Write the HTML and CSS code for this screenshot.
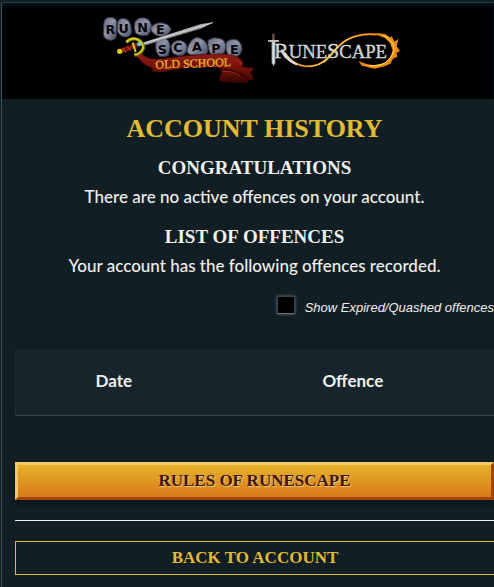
FILE: index.html
```html
<!DOCTYPE html>
<html lang="en">
<head>
    <meta charset="UTF-8">
    <meta name="viewport" content="width=device-width, initial-scale=1.0">
    <title>Account History</title>
    <link rel="stylesheet" href="styles.css">
</head>
<body>
    <div class="page">
        <header class="header">
            <a href="#" class="logo-link" aria-label="Old School RuneScape">
                <svg class="logo-osrs" viewBox="30 36 480 225">
                    <defs>
                        <linearGradient id="stone" x1="0" y1="0" x2="1" y2="1">
                            <stop offset="0" stop-color="#666b80"/>
                            <stop offset="0.45" stop-color="#9093a6"/>
                            <stop offset="1" stop-color="#454a5e"/>
                        </linearGradient>
                        <linearGradient id="ribbon" x1="0" y1="0" x2="0" y2="1">
                            <stop offset="0" stop-color="#8f1f16"/>
                            <stop offset="0.5" stop-color="#751009"/>
                            <stop offset="1" stop-color="#350604"/>
                        </linearGradient>
                        <linearGradient id="gold" x1="0" y1="0" x2="0" y2="1">
                            <stop offset="0" stop-color="#fff04a"/>
                            <stop offset="1" stop-color="#d98a12"/>
                        </linearGradient>
                    </defs>
                    <!-- stones -->
                    <g fill="url(#stone)" stroke="#34384a" stroke-width="3">
                        <path d="M42 66Q44 52 62 52Q79 53 80 67L79 108Q76 121 61 121Q40 118 40 100Z"/>
                        <path d="M82 77Q81 58 98 55Q119 57 122 76L125 96Q121 112 104 111Q86 107 82 91Z"/>
                        <path d="M135 65Q145 51 164 54Q181 58 184 76Q186 96 172 106Q152 111 137 100Q130 83 135 65Z"/>
                        <path d="M181 84Q193 68 211 68Q237 70 243 88Q238 106 212 109Q188 107 181 84Z"/>
                        <path d="M199 122Q208 109 226 115Q241 124 240 143L235 166Q222 174 207 168Q196 155 197 138Z"/>
                        <path d="M243 139Q249 122 268 121Q286 123 291 140Q292 160 276 166Q257 169 247 157Z"/>
                        <path d="M292 146Q299 119 320 112Q344 115 353 139Q357 158 345 165L303 165Q288 160 292 146Z"/>
                        <path d="M354 121Q369 109 388 115Q406 119 407 139Q406 161 392 170L365 166Q352 149 354 121Z"/>
                        <path d="M408 128Q419 116 437 118Q456 126 456 148Q453 166 438 172L415 167Q406 151 408 128Z"/>
                    </g>
                    <g class="stone-letters">
                        <text x="61" y="103">R</text>
                        <text x="101" y="99">U</text>
                        <text x="158" y="96">N</text>
                        <text x="211" y="101">E</text>
                        <text x="217" y="161">S</text>
                        <text x="264" y="157">C</text>
                        <text x="321" y="154">A</text>
                        <text x="378" y="158">P</text>
                        <text x="433" y="161">E</text>
                    </g>
                    <!-- ribbon -->
                    <path d="M130 159L152 160Q174 180 208 177Q287 165 368 162Q445 158 459 187L456 200L491 205L482 218L492 237L475 240L470 249L391 244L388 234L396 216L387 203Q320 194 215 216L187 215L187 204L163 193Z" fill="url(#ribbon)" stroke="#3b0805" stroke-width="2"/>
                    <path d="M388 207Q426 207 456 226L470 230" fill="none" stroke="#3a0604" stroke-width="6"/>
                    <path d="M397 213Q431 213 451 227M431 180Q449 181 459 194" fill="none" stroke="#b53a27" stroke-width="2"/>
                    <text class="ribbon-text" x="310" y="202" transform="rotate(-2 310 202)" fill="url(#gold)">OLD SCHOOL</text>
                    <!-- sword -->
                    <path d="M157 128L333 72L371 67L337 84L160 137Z" fill="#a9adb2"/>
                    <path d="M159 131L369 68" stroke="#e9e9e9" stroke-width="2"/>
                    <path d="M159 137L337 84" stroke="#5f6469" stroke-width="2"/>
                    <path d="M90 154L142 134" stroke="#7f160d" stroke-width="14"/>
                    <path d="M99 143L108 158M112 139L121 153" stroke="#d14b20" stroke-width="3"/>
                    <path d="M109 128Q122 113 142 118Q160 126 161 144Q153 164 134 166" fill="none" stroke="#746f06" stroke-width="10"/>
                    <path d="M109 126Q123 111 142 118Q159 126 159 144Q152 162 133 164M128 128L137 156" fill="none" stroke="#d7cc14" stroke-width="6"/>
                    <circle cx="89" cy="154" r="8" fill="#d8c916"/>
                    <circle cx="148" cy="132" r="7" fill="#6fc9c5"/>
                </svg>
            </a>
            <a href="#" class="logo-link" aria-label="RuneScape">
                <svg class="logo-rs" viewBox="30 30 420 120">
                    <defs>
                        <linearGradient id="silver" x1="0" y1="0" x2="0" y2="1">
                            <stop offset="0" stop-color="#fafafa"/>
                            <stop offset="0.55" stop-color="#bfc3c5"/>
                            <stop offset="1" stop-color="#f0f0f0"/>
                        </linearGradient>
                        <linearGradient id="fire" x1="0" y1="0" x2="1" y2="0">
                            <stop offset="0" stop-color="#e8e8e8"/>
                            <stop offset="0.2" stop-color="#e5a91c"/>
                            <stop offset="0.55" stop-color="#ffe271"/>
                            <stop offset="1" stop-color="#f38b0b"/>
                        </linearGradient>
                    </defs>
                    <!-- flaming loop -->
                    <path d="M89 98C113 135 143 142 173 138C214 132 225 101 256 74C287 45 332 40 365 44" fill="none" stroke="#a73b04" stroke-width="6"/>
                    <path d="M89 98C113 135 143 142 173 138C214 132 225 101 256 74C287 45 332 40 365 44" fill="none" stroke="url(#fire)" stroke-width="4"/>
                    <path d="M340 41L370 40L390 42L407 53L410 47L418 65L430 57L425 79L435 93L424 99L427 110L414 116L406 131L389 139L359 146L321 137L310 124L338 133L360 136L389 128L406 111L413 91L405 70L390 54L368 46Z" fill="#ef8910"/>
                    <path d="M382 46Q418 60 417 88Q411 120 380 134L342 139" fill="none" stroke="#ffe056" stroke-width="3"/>
                    <text class="rs-letters" x="57" y="113"><tspan class="rs-cap">R</tspan>UNE<tspan class="rs-cap">S</tspan>CAPE</text>
                    <path d="M53 41L58 41L58 60L72 60L72 65L61 66L61 128L56 138L50 128L50 66L39 65L39 60L53 60Z" fill="#b9bec0"/>
                    <path d="M55 67V131" stroke="#f7f7f7" stroke-width="2"/>
                    <path d="M55 42V60" stroke="#7b4727" stroke-width="4"/>
                    <path d="M80 89Q94 122 126 134" fill="none" stroke="#ddd" stroke-width="6"/>
                    <path d="M207 127Q228 108 250 80" fill="none" stroke="#ffce4b" stroke-width="4"/>
                </svg>
            </a>
        </header>
        <main class="content">
            <h1>ACCOUNT HISTORY</h1>
            <section>
                <h2>CONGRATULATIONS</h2>
                <p>There are no active offences on your account.</p>
            </section>
            <section>
                <h2>LIST OF OFFENCES</h2>
                <p>Your account has the following offences recorded.</p>
            </section>
            <div class="filter">
                <input type="checkbox" id="showExpired">
                <label for="showExpired">Show Expired/Quashed offences</label>
            </div>
            <table class="offences">
                <thead>
                    <tr>
                        <th class="date-col" scope="col">Date</th>
                        <th scope="col">Offence</th>
                    </tr>
                </thead>
            </table>
            <button type="button" class="rules-btn">RULES OF RUNESCAPE</button>
            <hr>
            <a href="#" class="back-btn">BACK TO ACCOUNT</a>
        </main>
    </div>
</body>
</html>
```

FILE: styles.css
```css
* {
    box-sizing: border-box;
}
body {
    margin: 0;
    padding: 2px 0 0 1px;
    background: #111e23;
    color: #f0f0ee;
    font-family: Lato, sans-serif;
    font-size: 17px;
    font-weight: 500;
    line-height: 24px;
    overflow-x: hidden;
}
.page {
    min-height: calc(100vh - 2px);
    border-top: 1px solid #293c45;
    border-left: 1px solid #3b4f58;
}
.header {
    display: flex;
    align-items: flex-start;
    justify-content: center;
    gap: 5px;
    height: 96px;
    padding: 9px 0 0 8px;
    background: #000;
    box-shadow: inset 0 3px 4px #03151c; /* Soft edge under the top line */
}
.logo-link {
    display: block;
}
.logo-osrs {
    display: block;
    width: 160px;
    height: 75px;
}
.logo-rs {
    display: block;
    width: 140px;
    height: 40px;
    margin-top: 18px;
}
.stone-letters {
    font: bold 38px "DejaVu Sans", sans-serif;
    text-anchor: middle;
    fill: #050508;
}
.ribbon-text {
    font: 36px "Liberation Serif", serif;
    text-anchor: middle;
    stroke: #e0a520;
    stroke-width: 1px;
}
.rs-letters {
    font: 56px "Liberation Serif", serif;
    fill: url(#silver);
    stroke: #d5d8da;
    stroke-width: 1px;
}
.rs-cap {
    font-size: 66px;
}
.content {
    padding: 14px 0 10px 13px;
    text-align: center;
}
h1,
h2 {
    font-family: "Liberation Serif", serif;
}
h1 {
    margin: 0 0 8px;
    color: #e1bb34;
    font-size: 26px;
    line-height: 32px;
}
h2 {
    margin: 0;
    font-size: 19px;
    line-height: 30px;
}
p {
    margin: 2px 0 13px;
}
.filter {
    display: flex;
    align-items: center;
    justify-content: flex-end;
    gap: 10px;
    margin: 18px 0 30px;
    font: italic 13px/20px "Liberation Sans", Arial, sans-serif;
}
.filter input {
    appearance: none;
    width: 18px;
    height: 18px;
    margin: 0 0 6px;
    background: #000;
    border: 1px solid #38434a;
    border-bottom-color: #69737a;
    box-shadow: 0 0 3px #69737a;
}
.offences {
    width: 100%;
    height: 66px;
    margin-bottom: 46px;
    border: 1px solid #1b2d34;
    border-right: none;
    border-bottom-color: #30464d;
    border-collapse: collapse;
    background: #15252b;
}
.offences th {
    padding: 0 0 4px;
}
.offences .date-col {
    width: 41%;
}
.rules-btn {
    display: block;
    width: 100%;
    height: 38px;
    padding: 0;
    border: 3px solid;
    border-color: #f0ca69 #a74408 #a74408 #f0ca69;
    background: linear-gradient(#e6b229, #d77b1b);
    box-shadow: 0 3px 4px #04161c;
    color: #3e160d;
    font: bold 17px "Liberation Serif", serif;
    text-shadow: 1px 1px 1px #f3cd83;
    cursor: pointer;
}
hr {
    height: 1px;
    margin: 20px 0;
    border: none;
    background: #f0f0ee;
}
.back-btn {
    display: block;
    border: 1px solid #e1bb34;
    border-right: none;
    color: #e1bb34;
    font: bold 17px/32px "Liberation Serif", serif;
    text-decoration: none;
}
.back-btn:hover {
    background: #1b2d34;
}
```
